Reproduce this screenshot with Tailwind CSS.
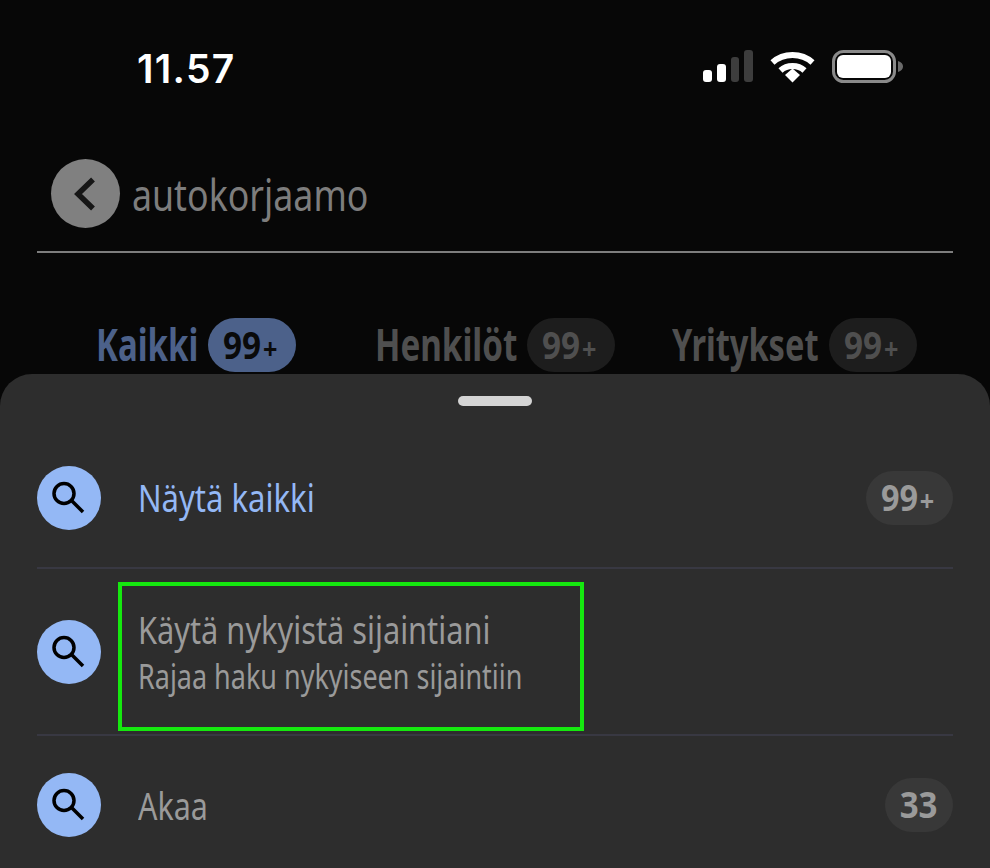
<!DOCTYPE html>
<html lang="fi">
<head>
  <meta charset="UTF-8" />
  <meta name="viewport" content="width=device-width, initial-scale=1.0" />
  <title>Haku</title>
  <script src="https://cdn.jsdelivr.net/npm/@tailwindcss/browser@4"></script>
</head>
<body class="bg-[#070707] font-['Noto_Sans',sans-serif]">
  <div class="relative w-[990px] h-[868px] overflow-hidden">

    <!-- status bar -->
    <div class="flex items-center justify-between h-[136px] pl-[137px] pr-[86px]">
      <span class="font-['Inter',sans-serif] font-semibold text-[39px] leading-none tracking-[1.3px] text-white">11.57</span>
      <div class="flex items-center gap-[17px] -mt-[3px]">
        <svg width="50" height="33" viewBox="0 0 50 33">
          <rect x="0" y="20" width="9" height="12" rx="3" fill="#fff"/>
          <rect x="14" y="14" width="9" height="18" rx="3" fill="#fff"/>
          <rect x="28" y="7" width="8" height="25" rx="3" fill="#3d3d3d"/>
          <rect x="41" y="0" width="9" height="32" rx="3" fill="#3d3d3d"/>
        </svg>
        <svg width="45" height="33" viewBox="0 0 45 33" fill="none">
          <path d="M2.500 12.500C13.500 2.500 31.500 2.500 42.500 12.500" stroke="#fff" stroke-width="6"/>
          <path d="M10.500 20.500C17 14.500 28 14.500 34.500 20.500" stroke="#fff" stroke-width="6"/>
          <path d="M15 25L22.500 18.500L30 25L22.500 32.500Z" fill="#fff"/>
        </svg>
        <svg width="72" height="33" viewBox="0 0 72 33" fill="none">
          <rect x="1.500" y="1.500" width="61" height="30" rx="10" stroke="#8a8a8a" stroke-width="3"/>
          <rect x="5" y="5" width="54" height="23" rx="6" fill="#fff"/>
          <path d="M66 11C69.500 12 71 14 71 16.500C71 19 69.500 21 66 22Z" fill="#6a6a6a"/>
        </svg>
      </div>
    </div>

    <!-- search field -->
    <div class="mx-[37px] flex items-center h-[117px] pl-[14px] border-b-[2px] border-[#7d7d7d]">
      <div class="flex items-center justify-center shrink-0 w-[69px] h-[69px] rounded-full bg-[#808080]">
        <svg width="28" height="36" viewBox="0 0 28 36" fill="none">
          <path d="M21 3.500L6 18L21 32.500" stroke="#161616" stroke-width="5.500"/>
        </svg>
      </div>
      <span class="block ml-[12px] w-[235px] whitespace-nowrap origin-left scale-x-[0.812] text-[44px] leading-none text-[#7d7d7d]">autokorjaamo</span>
    </div>

    <!-- tabs -->
    <div class="flex items-center h-[54px] mt-[65px] pl-[96px]">
      <span class="block -mt-[2px] w-[101px] whitespace-nowrap origin-left scale-x-[0.75] text-[44px] font-bold leading-none text-[#4c618a]">Kaikki</span>
      <span class="ml-[11px] flex items-center justify-center w-[88px] h-[54px] pr-[4px] rounded-full bg-[#4c618a] text-[37px] font-bold text-[#0a0a0a]"><span class="scale-x-[0.9] whitespace-nowrap">99<span class="ml-[2px] text-[28px]">+</span></span></span>
      <span class="block -mt-[2px] ml-[79px] w-[141px] whitespace-nowrap origin-left scale-x-[0.755] text-[44px] font-bold leading-none text-[#4f4f4f]">Henkilöt</span>
      <span class="ml-[11px] flex items-center justify-center w-[88px] h-[54px] pr-[4px] rounded-full bg-[#1d1d1d] text-[37px] font-bold text-[#4f4f4f]"><span class="scale-x-[0.9] whitespace-nowrap">99<span class="ml-[2px] text-[28px]">+</span></span></span>
      <span class="block -mt-[2px] ml-[57px] w-[146px] whitespace-nowrap origin-left scale-x-[0.74] text-[44px] font-bold leading-none text-[#4f4f4f]">Yritykset</span>
      <span class="ml-[11px] flex items-center justify-center w-[88px] h-[54px] pr-[4px] rounded-full bg-[#1d1d1d] text-[37px] font-bold text-[#4f4f4f]"><span class="scale-x-[0.9] whitespace-nowrap">99<span class="ml-[2px] text-[28px]">+</span></span></span>
    </div>

    <!-- bottom sheet -->
    <div class="absolute left-0 right-0 top-[374px] bottom-0 bg-[#2d2d2d] rounded-t-[32px]">
      <div class="flex justify-center pt-[22px]">
        <div class="w-[74px] h-[10px] rounded-full bg-[#d4d4d4]"></div>
      </div>
      <div class="px-[37px] mt-[23px]">
        <div class="flex items-center h-[140px] border-b-[2px] border-[#383842]">
          <div class="flex items-center justify-center shrink-0 w-[64px] h-[64px] rounded-full bg-[#94b8f5]">
            <svg width="40" height="40" viewBox="0 0 40 40" fill="none" stroke="#000" stroke-width="3.500">
              <circle cx="15" cy="15.500" r="10"/><path d="M22.500 22.500L34 34"/>
            </svg>
          </div>
          <span class="block -mt-[3px] ml-[37px] flex-1 whitespace-nowrap origin-left scale-x-[0.796] text-[39px] leading-none text-[#94b8f5]">Näytä kaikki</span>
          <span class="flex items-center justify-center w-[87px] h-[54px] pr-[3px] rounded-full bg-[#383838] text-[36px] font-bold text-[#9a9a9a]"><span class="scale-x-[0.9] whitespace-nowrap">99<span class="ml-[2px] text-[28px]">+</span></span></span>
        </div>
        <div class="flex items-center h-[167px] border-b-[2px] border-[#383842]">
          <div class="flex items-center justify-center shrink-0 w-[64px] h-[64px] rounded-full bg-[#94b8f5]">
            <svg width="40" height="40" viewBox="0 0 40 40" fill="none" stroke="#000" stroke-width="3.500">
              <circle cx="15" cy="15.500" r="10"/><path d="M22.500 22.500L34 34"/>
            </svg>
          </div>
          <div class="ml-[37px] flex flex-col gap-[11px]">
            <span class="block w-[352px] whitespace-nowrap origin-left scale-x-[0.789] text-[39px] leading-[38px] text-[#9a9a9a]">Käytä nykyistä sijaintiani</span>
            <span class="block w-[384px] whitespace-nowrap origin-left scale-x-[0.793] text-[34px] leading-[34px] text-[#9a9a9a]">Rajaa haku nykyiseen sijaintiin</span>
          </div>
        </div>
        <div class="flex items-center h-[138px]">
          <div class="flex items-center justify-center shrink-0 w-[64px] h-[64px] rounded-full bg-[#94b8f5]">
            <svg width="40" height="40" viewBox="0 0 40 40" fill="none" stroke="#000" stroke-width="3.500">
              <circle cx="15" cy="15.500" r="10"/><path d="M22.500 22.500L34 34"/>
            </svg>
          </div>
          <span class="block -mt-[2px] ml-[37px] flex-1 whitespace-nowrap origin-left scale-x-[0.78] text-[39px] leading-none text-[#9a9a9a]">Akaa</span>
          <span class="flex items-center justify-center w-[68px] h-[54px] rounded-full bg-[#383838] text-[36px] font-bold text-[#9a9a9a]"><span class="scale-x-[0.92]">33</span></span>
        </div>
      </div>
    </div>

    <!-- green highlight box -->
    <div class="absolute left-[118px] top-[582px] w-[466px] h-[149px] border-[4px] border-[#15e80f]"></div>
  </div>
</body>
</html>
